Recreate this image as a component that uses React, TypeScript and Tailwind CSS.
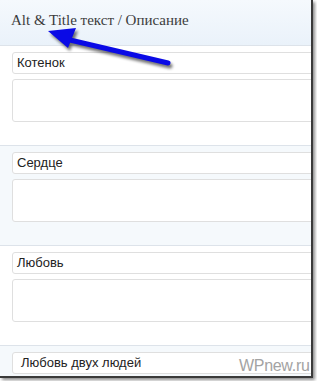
import React from 'react';

const rows = [
  { title: 'Котенок', tinted: false },
  { title: 'Сердце', tinted: true },
  { title: 'Любовь', tinted: false },
];

const Row = ({ title, tinted }: { title: string; tinted: boolean }) => (
  <div className={`h-[100px] shrink-0 border-t border-[#dde3ea] pl-[12px] pt-[6px] ${tinted ? 'bg-[#f5f9fc]' : 'bg-white'}`}>
    <div className="h-[22px] w-[320px] rounded-[3px] border border-[#dfdfdf] bg-white pl-[4px] text-[13px] leading-[20px] text-[#222]">
      {title}
    </div>
    <div className="mt-[5px] h-[43px] w-[320px] rounded-[3px] border border-[#dfdfdf] bg-white" />
  </div>
);

const App = () => {
  return (
    <div className="relative h-[381px] w-[317px] overflow-hidden bg-white" style={{ fontFamily: '"Liberation Sans", Arial, sans-serif' }}>
      <div className="flex h-[378px] w-[313px] flex-col overflow-hidden border-b-2 border-r-2 border-[#3a3a3a] shadow-[2px_2px_3px_rgba(0,0,0,0.45)]">
        <div className="flex h-[45px] shrink-0 items-center bg-gradient-to-b from-[#f5f9fd] to-[#eaf2fa] pb-[4px] pl-[11px]">
          <span className="text-[15px] text-[#3c3c3c]" style={{ fontFamily: '"Liberation Serif", "DejaVu Serif", serif' }}>
            Alt &amp; Title текст / Описание
          </span>
        </div>
        {rows.map((r) => (
          <Row key={r.title} title={r.title} tinted={r.tinted} />
        ))}
        <div className="flex-1 border-t border-[#dde3ea] bg-[#f5f9fc] pl-[12px] pt-[6px]">
          <div className="flex h-[22px] w-[320px] items-center rounded-[3px] border border-[#dfdfdf] bg-white pl-[8px] text-[13px] text-[#222]">
            Любовь двух людей
          </div>
        </div>
      </div>

      <span className="absolute left-[239px] top-[354px] text-[16px] tracking-[-0.3px] text-[#a3a3a3]">WPnew.ru</span>

      <svg className="pointer-events-none absolute left-0 top-0" width="317" height="381" viewBox="0 0 317 381">
        <defs>
          <filter id="sh" x="-20%" y="-20%" width="140%" height="140%">
            <feGaussianBlur stdDeviation="1.5" />
          </filter>
        </defs>
        <g transform="translate(2 3)" opacity="0.55" filter="url(#sh)">
          <line x1="70" y1="40" x2="168" y2="63" stroke="#000" strokeWidth="5" strokeLinecap="round" />
          <polygon points="48,31 76,28 68,48" fill="#000" />
        </g>
        <line x1="70" y1="40" x2="168" y2="63" stroke="#0a0ae6" strokeWidth="5" strokeLinecap="round" />
        <polygon points="48,31 76,28 68,48" fill="#0a0ae6" />
      </svg>
    </div>
  );
};

export default App;
